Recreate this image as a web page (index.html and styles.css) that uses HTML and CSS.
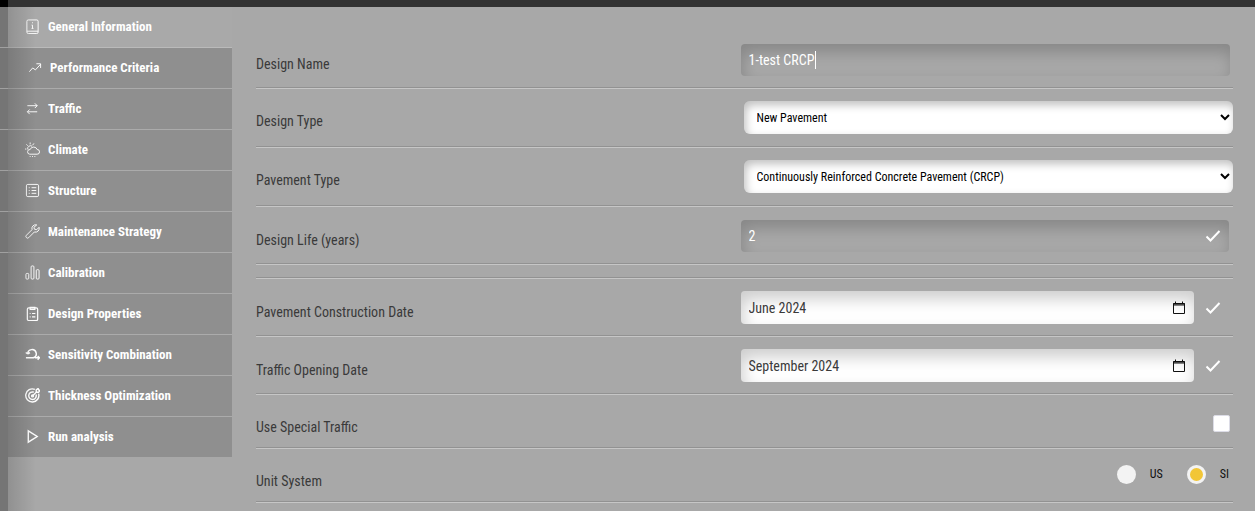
FILE: index.html
```html
<!DOCTYPE html>
<html lang="en">
<head>
  <meta charset="UTF-8" />
  <meta name="viewport" content="width=device-width, initial-scale=1.0" />
  <title>Pavement Design - General Information</title>
  <link rel="stylesheet" href="styles.css">
</head>
<body>
  <header class="topbar"></header>
  <div class="layout">
    <div class="rail"></div>
    <nav class="sidebar">
      <a href="#general" class="active">
        <svg viewBox="0 0 16 16"><rect x="2" y="1" width="12" height="14.5" rx="1.5"/><path d="M2 13h12M8 6.500v3.500M7 6.500h1M7 10h2M7.500 4h1"/></svg>
        General Information
      </a>
      <a href="#performance" class="indent">
        <svg viewBox="0 0 16 16"><path d="M2.500 12.500l3.500-4 3 2 5.500-6M10 4h4.500v4.500"/></svg>
        Performance Criteria
      </a>
      <a href="#traffic">
        <svg viewBox="0 0 16 16"><path d="M2.500 5h10.500M10.500 2.500L13 5l-2.500 2.500M13 11.500H2.500M5 9l-2.500 2.500L5 14"/></svg>
        Traffic
      </a>
      <a href="#climate">
        <svg viewBox="0 0 16 16"><path d="M5 13h8a2.500 2.500 0 0 0 0-5A4 4 0 0 0 5.500 8 2.500 2.500 0 0 0 5 13zM3 8a3 3 0 0 1 4.500-3.500M0 7.500h1.500M1.500 2.500L3 4M5.500 .5V2.500M9.500 1.500L8 3.500M5 15.500h1M7.500 15.500h1M10 15.500h1"/></svg>
        Climate
      </a>
      <a href="#structure">
        <svg viewBox="0 0 16 16"><rect x="1.500" y="1.500" width="13" height="13" rx="1.500"/><path d="M4 5h1M7 5h5M4 8h1M7 8h5M4 11h1M7 11h5"/></svg>
        Structure
      </a>
      <a href="#maintenance">
        <svg viewBox="0 0 16 16"><path d="M12.500 1a4 4 0 0 0-5 5L1.500 12a1.700 1.700 0 0 0 2.500 2.500l6-6a4 4 0 0 0 5-5L12.500 6l-2.500-.5-.5-2z"/></svg>
        Maintenance Strategy
      </a>
      <a href="#calibration">
        <svg viewBox="0 0 16 16"><rect x="1" y="9" width="3" height="6" rx="1"/><rect x="6.500" y="1" width="3" height="14" rx="1"/><rect x="12" y="5" width="3" height="10" rx="1"/></svg>
        Calibration
      </a>
      <a href="#properties">
        <svg viewBox="0 0 16 16" class="medium"><rect x="2.500" y="2" width="11" height="13.500" rx="1.500"/><path d="M5.500 3.500v-2h5v2zM5 8h1M7.500 8H11M5 11.500h1M7.500 11.500H11"/></svg>
        Design Properties
      </a>
      <a href="#sensitivity">
        <svg viewBox="0 0 16 16" class="bold"><path d="M3 7.500A4.500 4.500 0 1 1 9 11.500H1M3 7.500L.8 5.800M3 7.500l2.300-1.500M10.500 11.500h5M13.500 9.500l2 2-2 2"/></svg>
        Sensitivity Combination
      </a>
      <a href="#thickness">
        <svg viewBox="0 0 16 16" class="bold"><path d="M10.500 1.500A7 7 0 1 0 14.500 6M9.500 4.500A4 4 0 1 0 11.800 7M8 8.500l4-4M12 4.500V2l2-1.500.5 1.500 1.500.5L14.500 4.500z"/><circle cx="8" cy="8.500" r="1"/></svg>
        Thickness Optimization
      </a>
      <a href="#run">
        <svg viewBox="0 0 16 16" class="bold"><path d="M3.500 2l9.500 6-9.500 6z"/></svg>
        Run analysis
      </a>
    </nav>

    <form class="content">
      <div class="row">
        <label for="designName">Design Name</label>
        <div class="field">
          <input id="designName" type="text" class="dark name" value="1-test CRCP">
          <span class="caret"></span>
        </div>
      </div>
      <div class="row select-row">
        <label for="designType">Design Type</label>
        <div class="field"><select id="designType"><option>New Pavement</option></select></div>
      </div>
      <div class="row select-row">
        <label for="pavementType">Pavement Type</label>
        <div class="field"><select id="pavementType"><option>Continuously Reinforced Concrete Pavement (CRCP)</option></select></div>
      </div>
      <div class="row">
        <label for="designLife">Design Life (years)</label>
        <div class="field">
          <input id="designLife" type="text" class="dark life" value="2">
          <svg class="check inside" viewBox="0 0 16 16"><path d="M1.500 8.500l4 4L14.500 3"/></svg>
        </div>
      </div>
      <div class="spacer"></div>
      <div class="row">
        <label for="constructionDate">Pavement Construction Date</label>
        <div class="field">
          <input id="constructionDate" type="text" class="month" value="June 2024">
          <button type="button" class="picker" aria-label="Pick construction month">
            <svg viewBox="0 0 14 14"><path d="M1.500 2.500h11v10h-11zM1 3h12M1 4h12M3.500 .5v2M10.500 .5v2"/></svg>
          </button>
          <svg class="check" viewBox="0 0 16 16"><path d="M1.500 8.500l4 4L14.500 3"/></svg>
        </div>
      </div>
      <div class="row">
        <label for="openingDate">Traffic Opening Date</label>
        <div class="field">
          <input id="openingDate" type="text" class="month" value="September 2024">
          <button type="button" class="picker" aria-label="Pick opening month">
            <svg viewBox="0 0 14 14"><path d="M1.500 2.500h11v10h-11zM1 3h12M1 4h12M3.500 .5v2M10.500 .5v2"/></svg>
          </button>
          <svg class="check" viewBox="0 0 16 16"><path d="M1.500 8.500l4 4L14.500 3"/></svg>
        </div>
      </div>
      <div class="row short">
        <label for="specialTraffic">Use Special Traffic</label>
        <div class="field end"><input id="specialTraffic" type="checkbox"></div>
      </div>
      <div class="row short" role="radiogroup" aria-labelledby="unitSystem">
        <span class="label" id="unitSystem">Unit System</span>
        <div class="field end units">
          <input id="us" type="radio" name="unit"><label for="us">US</label>
          <input id="si" type="radio" name="unit" checked><label for="si">SI</label>
        </div>
      </div>
    </form>
  </div>
</body>
</html>
```
FILE: styles.css
```css
* {
  box-sizing: border-box;
}
body {
  margin: 0;
  min-height: 100vh;
  display: flex;
  flex-direction: column;
  background: #a8a8a8;
  color: #3a3a3a;
  font-family: "Roboto Condensed", "Liberation Sans Narrow", Roboto, sans-serif;
  font-size: 14px;
}
.topbar {
  height: 7px;
  background: #333;
  border-left: 8px solid #000;
}
.layout {
  flex: 1;
  display: flex;
  position: relative;
}
.rail {
  width: 8px;
  background: #757575 repeating-linear-gradient(#757575 0 40px, #a0a0a0 40px 41px) no-repeat;
  background-size: 100% 246px;
}
/* shadow cast by the rail over the menu */
.layout::after {
  content: "";
  position: absolute;
  left: 8px;
  top: 0;
  bottom: 0;
  width: 28px;
  background: linear-gradient(to right, rgba(0, 0, 0, 0.14), transparent);
  pointer-events: none;
}
.sidebar {
  width: 224px;
}
.sidebar a {
  display: flex;
  align-items: center;
  gap: 8px;
  height: 41px;
  padding: 0 16px 2px 17px;
  background: #8f8f8f;
  border-bottom: 1px solid #ababab;
  color: #fff;
  font-size: 13px;
  font-weight: bold;
  text-decoration: none;
}
.sidebar a.active {
  background: #a9a9a9;
  border-bottom-color: #bababa;
}
.sidebar a.indent {
  padding-left: 19px;
}
.sidebar a:last-child {
  height: 40px;
  border-bottom: none;
}
svg {
  fill: none;
  stroke: #fff;
}
.sidebar svg {
  width: 15px;
  height: 15px;
}
.sidebar svg.medium {
  stroke-width: 1.3;
}
.sidebar svg.bold {
  stroke-width: 1.5;
}
.content {
  flex: 1;
  padding: 23px 22px 0 24px;
}
.row {
  display: flex;
  align-items: center;
  height: 58px;
  padding-top: 2px;
  border-bottom: 1px solid #929292;
  box-shadow: 0 1px 0 #c6c6c6;
}
.select-row {
  height: 59px;
  padding-top: 0;
}
.short {
  height: 54px;
  padding-top: 0;
}
.spacer {
  height: 14px;
  border-bottom: 1px solid #929292;
  box-shadow: 0 1px 0 #c6c6c6;
}
.row > label, .row > .label {
  flex: 1;
  padding-top: 8px;
}
.short > label, .short > .label {
  padding-top: 13px;
}
.field {
  flex: 0 0 calc(50% + 4px);
  display: flex;
  align-items: center;
  position: relative;
}
input, select {
  margin: 0;
  border: none;
  outline: none;
  font-family: inherit;
}
input[type="text"] {
  flex: 1;
  height: 33px;
  padding: 0 8px;
  border-radius: 4px;
  font-size: 14px;
  box-shadow: inset 2px 8px 16px rgba(0, 0, 0, 0.2);
}
input.dark {
  height: 32px;
  background: transparent;
  color: #fff;
}
.name {
  margin-right: 3px;
}
.life {
  margin-right: 4px;
}
.caret {
  position: absolute;
  left: 74px;
  width: 1px;
  height: 18px;
  background: #fff;
}
.month {
  background: #fff;
  color: #3a3a3a;
}
.picker {
  position: absolute;
  right: 47px;
  display: flex;
  padding: 0;
  border: none;
  background: none;
}
.picker svg {
  width: 14px;
  height: 14px;
  stroke: #111;
}
select {
  flex: 1;
  height: 33px;
  margin-left: 3px;
  padding: 1px 9px 0;
  border-radius: 6px;
  background: #fff;
  color: #000;
  font-size: 12px;
  box-shadow: inset 2px 4px 8px rgba(0, 0, 0, 0.25);
}
.check {
  width: 16px;
  height: 16px;
  margin: 0 12px 0 11px;
  stroke-width: 2;
}
.inside {
  position: absolute;
  right: 0;
}
.end {
  justify-content: flex-end;
}
input[type="checkbox"] {
  appearance: none;
  width: 17px;
  height: 17px;
  margin: 6px 3px 0 0;
  border: 1px solid #dcdce6;
  border-radius: 2px;
  background: #fff;
}
input[type="radio"] {
  appearance: none;
  width: 19px;
  height: 19px;
  border-radius: 50%;
  background: #f3f3f3;
}
input[type="radio"]:checked {
  background: #f2c637;
  border: 3px solid #f3f3f3;
}
.units label {
  margin: 0 4px 2px 14px;
  color: #111;
  font-size: 12px;
}
.units label:not(:last-child) {
  margin-right: 24px;
}
```
